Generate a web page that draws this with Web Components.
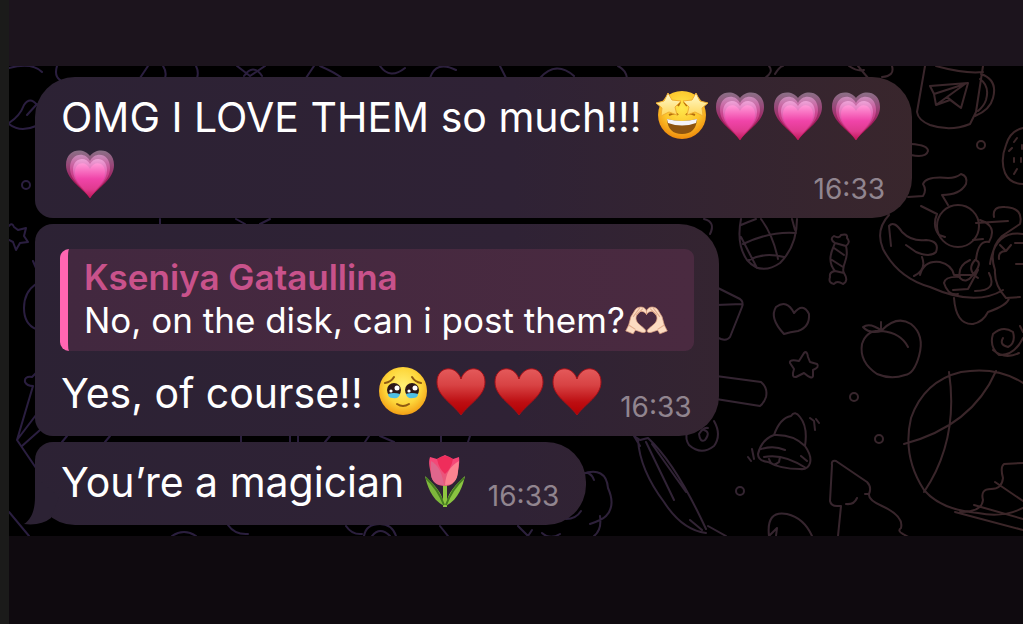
<!DOCTYPE html>
<html lang="en">
<head>
<meta charset="utf-8">
<meta name="viewport" content="width=device-width, initial-scale=1">
<title>Chat</title>
<style>
    body {
        margin: 0;
        background: #0f0a0f;
        color: #fff;
        font-family: Inter, "Liberation Sans", sans-serif;
    }
</style>
</head>
<body>
<chat-screen>
    <chat-bubble class="first">
        OMG I LOVE THEM so much!!!
        <chat-emoji name="star-eyes"></chat-emoji><chat-emoji name="growing-heart"></chat-emoji><chat-emoji name="growing-heart"></chat-emoji><chat-emoji name="growing-heart"></chat-emoji>
        <chat-emoji name="growing-heart"></chat-emoji>
        <time slot="time">16:33</time>
    </chat-bubble>
    <chat-bubble class="middle">
        <chat-reply slot="reply" author="Kseniya Gataullina">No, on the disk, can i post them?<chat-emoji name="heart-hands"></chat-emoji></chat-reply>
        Yes, of course!!
        <chat-emoji name="tearful"></chat-emoji><chat-emoji name="heart"></chat-emoji><chat-emoji name="heart"></chat-emoji><chat-emoji name="heart"></chat-emoji>
        <time slot="time">16:33</time>
    </chat-bubble>
    <chat-bubble class="last" tail>
        You’re a magician
        <chat-emoji name="tulip"></chat-emoji>
        <time slot="time">16:33</time>
    </chat-bubble>
</chat-screen>

<script>
/**
 * Drawings for chat-emoji, all on a 58x58 box.
 */
const EMOJI = {
    'star-eyes': {
        label: 'Star-struck',
        art: `
            <defs>
                <radialGradient id="f" cx=".5" cy=".35" r=".65">
                    <stop offset="0" stop-color="#ffe94e"/><stop offset=".6" stop-color="#fdc52b"/><stop offset="1" stop-color="#ee8a0c"/>
                </radialGradient>
                <linearGradient id="s" x1="0" y1="0" x2="0" y2="1">
                    <stop offset="0" stop-color="#fffbd0"/><stop offset="1" stop-color="#ffd75a"/>
                </linearGradient>
            </defs>
            <circle cx="29" cy="29" r="24" fill="url(#f)"/>
            <path d="M14 33 Q29 37 44 33 Q43 48 29 48 Q15 48 14 33Z" fill="#8d5410"/>
            <path d="M14 33 Q29 37 44 33 L43 37 Q29 42 15 37Z" fill="#f4f4fa"/>
            <path d="M16 29 Q23 26 25 29 M42 29 Q35 26 33 29 M27 16 L25 20 M31 16 L34 20" fill="none" stroke="#b46d0d" stroke-width="2"/>
            <g fill="url(#s)" stroke="#f0ae31" stroke-width="1" stroke-linejoin="round">
                <path d="M15 7 L19 14 L28 15 L22 21 L24 29 L16 26 L8 30 L9 22 L3 17 L11 15Z"/>
                <path d="M43 7 L39 14 L30 15 L36 21 L34 29 L42 26 L50 30 L49 22 L55 17 L47 15Z"/>
            </g>`
    },
    'growing-heart': {
        label: 'Growing heart',
        art: `
            <defs>
                <linearGradient id="a" x1="0" y1="0" x2="0" y2="1">
                    <stop offset="0" stop-color="#8b7187"/><stop offset=".28" stop-color="#974c7b"/><stop offset=".6" stop-color="#a01f61"/><stop offset="1" stop-color="#a80e43"/>
                </linearGradient>
                <linearGradient id="b" x1="0" y1="0" x2="0" y2="1">
                    <stop offset="0" stop-color="#c98ebb"/><stop offset=".4" stop-color="#cb4590"/><stop offset="1" stop-color="#b51255"/>
                </linearGradient>
                <linearGradient id="c" x1="0" y1="0" x2="0" y2="1">
                    <stop offset="0" stop-color="#eda5d8"/><stop offset=".5" stop-color="#dc4ba4"/><stop offset="1" stop-color="#bc185e"/>
                </linearGradient>
                <linearGradient id="d" x1="0" y1="0" x2="0" y2="1">
                    <stop offset="0" stop-color="#ff9bd8"/><stop offset=".45" stop-color="#f044a9"/><stop offset=".75" stop-color="#df3a8e"/><stop offset="1" stop-color="#be1657"/>
                </linearGradient>
            </defs>
            <path fill="url(#a)" d="M29 12 C23 3 5 4 5 21 C5 35 20 43 29 54 C38 43 53 35 53 21 C53 4 35 3 29 12Z"/>
            <path fill="url(#b)" d="M29 17 C24 7 9 9 9 24 C9 37 22 44 29 54 C36 44 49 37 49 24 C49 9 34 7 29 17Z"/>
            <path fill="url(#c)" d="M29 20 C25 12 12 13 12 26 C12 38 23 45 29 54 C35 45 46 38 46 26 C46 13 33 12 29 20Z"/>
            <path fill="url(#d)" d="M29 25 C25 16 14 18 14 28 C14 39 24 45 29 54 C34 45 44 39 44 28 C44 18 33 16 29 25Z"/>`
    },
    'heart': {
        label: 'Red heart',
        art: `
            <defs>
                <linearGradient id="h" x1="0" y1="0" x2="0" y2="1">
                    <stop offset="0" stop-color="#e45a5b"/><stop offset=".35" stop-color="#d84344"/><stop offset=".72" stop-color="#bd0e12"/><stop offset="1" stop-color="#b20002"/>
                </linearGradient>
            </defs>
            <path fill="url(#h)" stroke="#a51018" stroke-width="1" d="M29 17 C24 2 5 4 5 20 C5 34 20 41 29 53 C38 41 53 34 53 20 C53 4 34 2 29 17Z"/>`
    },
    'tearful': {
        label: 'Face holding back tears',
        art: `
            <defs>
                <radialGradient id="f" cx=".5" cy=".4" r=".62">
                    <stop offset="0" stop-color="#fff176"/><stop offset=".6" stop-color="#fdd63a"/><stop offset="1" stop-color="#f29a12"/>
                </radialGradient>
            </defs>
            <circle cx="29" cy="29" r="24" fill="url(#f)"/>
            <path d="M11 21 Q17 20 20 15 M47 21 Q41 20 38 15" fill="none" stroke="#8f5a12" stroke-width="2" stroke-linecap="round"/>
            <circle cx="20" cy="28" r="7" fill="#2c1718"/>
            <circle cx="38" cy="28" r="7" fill="#2c1718"/>
            <path d="M14 32 Q20 30 26 32 Q25 37 19 36 Q14 36 14 32Z M32 32 Q38 30 44 32 Q44 36 39 36 Q33 37 32 32Z" fill="#4fbfe4"/>
            <g fill="#fff">
                <circle cx="23" cy="26" r="2.5"/><circle cx="17" cy="29" r="1.6"/>
                <circle cx="41" cy="26" r="2.5"/><circle cx="35" cy="29" r="1.6"/>
            </g>
            <path d="M23 42 Q29 46 35 42" fill="none" stroke="#8f5a12" stroke-width="2" stroke-linecap="round"/>`
    },
    'heart-hands': {
        label: 'Heart hands',
        art: `
            <defs>
                <g id="hand">
                    <path fill="#fcdcc2" stroke="#d99e80" stroke-width="1" stroke-linejoin="round" d="M29 19 C28 12 19 11 14 16 L8 26 L5 37 L1 45 L11 49 L14 44 C20 46 26 49 28 46 C29 43 23 40 18 35 C14 31 14 26 17 22 C20 17 26 18 29 23Z"/>
                    <path fill="none" stroke="#e2ad8f" stroke-width="1.5" d="M20 14 L11 26 M24 15 L15 24 M5 37 L14 43"/>
                </g>
            </defs>
            <use href="#hand"/>
            <use href="#hand" transform="matrix(-1 0 0 1 58 0)"/>`
    },
    'tulip': {
        label: 'Tulip',
        art: `
            <defs>
                <linearGradient id="p" x1="0" y1="0" x2="0" y2="1">
                    <stop offset="0" stop-color="#fa4277"/><stop offset="1" stop-color="#e2607c"/>
                </linearGradient>
            </defs>
            <path d="M27 30 H31 V56 H27Z" fill="#8fc640"/>
            <path d="M9 25 C11 34 15 48 28 55 C27 41 18 34 9 25Z" fill="#7eb83c"/>
            <path d="M49 25 C47 34 43 48 30 55 C31 41 40 34 49 25Z" fill="#8ac441"/>
            <path d="M10 27 Q22 38 28 54 M48 27 Q36 38 30 54" fill="none" stroke="#467c20" stroke-width="2"/>
            <path d="M14 6 L21 8 L29 4 L37 8 L43 6 C44 12 42 19 41 25 Q38 35 29 35 Q17 35 15 24 C14 17 12 12 14 6Z" fill="url(#p)"/>
            <path d="M21 8 Q29 2 37 8 Q35 18 29 23 Q23 18 21 8Z" fill="#ef2d5b"/>
            <path d="M15 10 Q25 15 28 34 Q16 34 15 23Z" fill="#df668c"/>
            <path d="M43 10 Q30 17 29 34 Q41 34 42 21Z" fill="#fc8391"/>`
    }
};

/**
 * One emoji sized to its line of text.
 * @attr {string} name - A key of EMOJI
 */
class ChatEmoji extends HTMLElement {
    connectedCallback() {
        const emoji = EMOJI[this.getAttribute('name')];
        this.attachShadow({ mode: 'open' }).innerHTML = `
            <style>
                :host {
                    display: inline-block;
                    width: var(--emoji-size, 58px);
                    height: var(--emoji-size, 58px);
                    vertical-align: top;
                }
                svg { display: block; width: 100%; height: 100%; overflow: visible; }
            </style>
            <svg viewBox="0 2 58 58" role="img" aria-label="${emoji.label}">${emoji.art}</svg>
        `;
    }
}

/**
 * Quoted message above the text of a bubble.
 * @attr {string} author - Name shown on the first line
 */
class ChatReply extends HTMLElement {
    connectedCallback() {
        this.attachShadow({ mode: 'open' }).innerHTML = `
            <style>
                :host {
                    --emoji-size: 43px;
                    display: block;
                    padding: 7px 24px 9px 16px;
                    border-left: 8px solid #ff66b2;
                    border-radius: 9px;
                    background: linear-gradient(90deg, #42283f, #4a2a40);
                    font-size: 35px;
                    line-height: 43px;
                    white-space: nowrap;
                }
                .author { color: #c8528b; font-weight: 600; }
            </style>
            <div class="author">${this.getAttribute('author')}</div>
            <div class="quote"><slot></slot></div>
        `;
    }
}

/**
 * A message bubble.
 * @attr {boolean} tail - Adds the tail at the bottom left
 */
class ChatBubble extends HTMLElement {
    connectedCallback() {
        this.attachShadow({ mode: 'open' }).innerHTML = `
            <style>
                :host {
                    position: relative;
                    display: block;
                    box-sizing: border-box;
                    width: fit-content;
                    max-width: 877px;
                    padding: 11px 27px 14px 26px;
                    border-radius: 18px 40px 40px 18px;
                    background: linear-gradient(90deg, #2c2234, #2f2235 50%, #39262c 90%) fixed;
                    font-size: 41px;
                    line-height: 58px;
                }
                :host(.first) { border-top-left-radius: 40px; }
                :host(.middle) { padding: 25px 25px 14px; }
                :host([tail]) { border-bottom-left-radius: 40px; }
                .row { display: flex; align-items: flex-end; gap: 14px; }
                :host(.middle) .row { padding: 13px 2px 0 1px; }
                /* a long message runs above the time */
                :host(.first) .text { margin-right: -88px; }
                ::slotted(time) {
                    margin: 0 0 -2px auto;
                    color: #91858f;
                    font-size: 28px;
                    line-height: 34px;
                }
                .tail {
                    position: absolute;
                    left: -12px;
                    bottom: 0;
                    display: none;
                }
                :host([tail]) .tail { display: block; }
            </style>
            <svg class="tail" width="48" height="48" aria-hidden="true">
                <path d="M12 0 V20 C12 32 9 42 1 47 Q18 49 28 41 L36 20Z" fill="#2c2234"/>
            </svg>
            <slot name="reply"></slot>
            <div class="row">
                <div class="text"><slot></slot></div>
                <slot name="time"></slot>
            </div>
        `;
    }
}

/**
 * The line-drawn pattern behind the messages.
 */
class ChatWallpaper extends HTMLElement {
    connectedCallback() {
        this.attachShadow({ mode: 'open' }).innerHTML = `
            <style>
                :host { display: block; overflow: hidden; }
                svg { display: block; width: 100%; height: 100%; }
            </style>
            <svg viewBox="9 66 1014 470" preserveAspectRatio="xMidYMid slice" aria-hidden="true">
                <defs>
                    <linearGradient id="ink" gradientUnits="userSpaceOnUse" x1="9" y1="0" x2="1023" y2="0">
                        <stop offset="0" stop-color="#2a1e40"/><stop offset=".55" stop-color="#2c203c"/><stop offset=".75" stop-color="#35252f"/><stop offset="1" stop-color="#3c2628"/>
                    </linearGradient>
                </defs>
                <g fill="none" stroke="url(#ink)" stroke-width="2" stroke-linecap="round" stroke-linejoin="round">
                    <!-- leaves and swirls along the edges -->
                    <path d="M9 68 Q32 62 42 72 M57 66 Q54 76 60 80 M140 78 L148 66 M163 66 Q167 72 165 78 M196 66 Q199 72 197 78 M237 66 L250 76 L265 66 M244 76 Q253 63 262 76 M306 78 L314 66 M320 66 Q334 72 342 78 M380 66 Q390 80 405 68 M430 78 Q436 60 456 70 M500 66 L506 78 M540 78 Q556 60 574 76"/>
                    <path d="M9 123 Q20 116 24 105 Q30 96 37 105 M37 104 L27 115 M9 124 Q20 133 36 126"/>
                    <circle cx="26" cy="185" r="4"/>
                    <path d="M9 226 Q12 222 14 227 L18 230 L26 228 L24 236 L28 242 L20 243 L16 250 L13 242 L9 240"/>
                    <path d="M33 261 L36 268 M36 284 Q24 292 24 308 Q24 324 36 329 M36 373 L32 377 Q24 376 25 382 Q27 386 33 386 L17 440 M36 415 L17 440 L36 468 M22 446 L40 430 M9 512 L29 536"/>
                    <path d="M160 219 V224 M236 219 L245 224 M270 219 L260 224 M62 442 L67 436 M105 442 L110 436 M241 436 V442 M290 436 V442 M298 436 V442 M330 436 L325 442 M365 442 L369 436 M380 436 L394 442 M441 436 V442 M468 442 L470 436"/>
                    <path d="M172 536 Q184 528 196 536 M228 525 Q235 535 248 534 M346 526 Q352 535 362 534 M364 536 Q366 524 380 524 Q392 524 396 536 M372 536 Q380 526 390 536 M440 526 L448 536 M518 526 L528 536 L532 530"/>
                    <path d="M582 474 Q590 470 594 480 M582 474 Q606 466 608 488 Q616 506 606 516 Q602 520 590 524 M566 519 Q576 519 581 511 M542 533 Q550 540 560 534 M600 516 Q602 530 594 536"/>
                    <path d="M634 436 L640 440 L648 438 Q676 464 706 529 M638 440 Q640 470 664 502 Q682 530 706 533 M646 442 L674 500 M652 444 L686 492 M634 436 L640 446 M690 520 L702 530 M708 526 L726 536"/>
                    <path d="M618 66 Q626 70 627 78 M765 78 Q774 72 769 66 M775 74 Q780 66 783 66 M849 66 Q858 72 864 70 M858 66 L868 78 M892 66 Q895 76 882 77"/>
                    <!-- mug with a paper plane -->
                    <path d="M925 66 L917 112 Q918 120 930 125 Q950 132 970 124 L976 112 L983 66 M936 66 Q965 74 983 72 M981 74 Q998 80 993 98 Q990 110 975 116 M980 79 Q990 86 986 100 Q984 106 978 111"/>
                    <path d="M930 86 L968 83 L961 108 L950 100 L936 105 L934 94Z M934 94 L965 84 L947 97 L936 105 M947 97 L961 108"/>
                    <circle cx="981" cy="145" r="4"/>
                    <path d="M911 144 Q928 145 928 151 Q926 158 911 155"/>
                    <path d="M1023 128 Q1010 131 1006 145 Q1000 160 1005 173 Q1010 184 1023 184 M1017 138 L1014 142 M1012 148 L1009 151 M1014 158 V162 M1021 158 V162 M1017 169 L1014 174 M1022 145 V149"/>
                    <!-- bather in a ring -->
                    <path d="M908 197 L923 196 Q927 190 923 184 Q926 176 948 178 Q956 178 961 174 Q968 176 966 184 Q960 195 942 195 L948 205"/>
                    <circle cx="958" cy="226" r="21"/>
                    <path d="M889 215 Q875 230 883 249 Q898 278 930 287 Q975 307 1003 290 M921 206 L937 214 M937 214 Q932 226 939 235 L945 237 M891 246 L889 226 Q894 220 902 232 Q912 242 926 240 Q940 241 936 252 Q930 258 916 252 L906 245 M922 257 Q927 270 914 276 M920 275 Q924 260 940 262 Q952 265 954 275 L972 275 M970 260 Q957 266 960 278 Q966 284 972 276 Q984 262 975 260 Q966 270 978 278 M944 283 Q945 276 960 277 M944 283 Q948 296 958 294 M953 290 L968 289 Q974 278 978 270 M976 260 Q978 240 989 242 Q998 226 980 220 M976 223 L1008 221 M994 217 Q992 206 1005 207 Q1024 208 1020 224 Q1008 232 1002 236 Q988 250 995 270 Q994 285 1006 298 L1020 297 M973 240 L983 239 M989 273 Q998 291 975 291 M954 298 Q956 325 973 324 Q983 322 988 312 Q1008 305 1009 298 M1023 234 Q995 230 990 264 M1000 245 L1006 251 L1011 245 M1006 251 Q998 251 999 259 M1015 243 H1023 M1016 264 H1023"/>
                    <!-- woven egg -->
                    <path d="M741 219 Q736 244 747 260 Q761 276 780 263 Q797 246 797 219 M741 225 Q748 222 756 219 M743 244 Q770 231 796 233 M749 260 Q764 252 784 257 M741 237 L757 268 M761 219 Q773 235 778 259 M792 219 L795 230"/>
                    <path d="M704 219 Q716 222 710 234"/>
                    <!-- candy -->
                    <path d="M835 243 Q829 239 834 236 Q839 239 841 235 Q848 233 847 238 Q851 242 846 246 Q848 254 845 262 Q842 270 844 273 Q849 281 843 284 Q837 280 834 284 Q828 283 830 277 Q829 272 835 271 Q827 262 833 248Z M834 248 L844 255 M832 260 L843 267 M835 243 L846 246 M835 271 L844 273"/>
                    <!-- envelope, heart, star, apple -->
                    <path d="M716 287 L740 299 Q744 302 742 307 L730 337 Q727 341 721 339 L716 337 M716 305 L742 304"/>
                    <path d="M784 334 Q769 318 776 307 Q787 299 794 313 Q803 302 809 314 Q810 327 798 331 Q790 332 784 334Z"/>
                    <path d="M804 353 Q807 350 808 357 L810 362 L817 364 Q820 367 813 370 L813 376 Q812 380 804 373 L796 377 Q791 378 794 369 L790 363 Q789 359 799 361Z"/>
                    <path d="M882 330 Q897 315 911 324 Q925 335 919 356 Q914 374 905 375 Q891 380 877 374 Q859 362 862 344 Q867 329 882 331 Q901 333 908 347 M882 331 Q870 322 863 327 Q869 334 882 331 M881 322 V331"/>
                    <path d="M1023 338 Q1014 356 999 355 Q989 347 993 334 Q1003 325 1013 332 Q1016 343 1008 347 Q999 345 1003 338 M1020 326 L1023 332 M993 350 Q1005 360 1019 353"/>
                    <path d="M716 376 L761 382 Q768 388 766 397 Q764 403 760 406 L716 399"/>
                    <path d="M708 428 Q703 427 699 434 Q700 443 705 440 Q711 432 704 430 M714 421 Q722 435 714 446 Q701 456 689 445 Q685 439 687 432"/>
                    <circle cx="854" cy="397" r="4"/><circle cx="879" cy="439" r="4"/><circle cx="740" cy="491" r="4"/>
                    <!-- bell -->
                    <path d="M774 435 Q780 418 791 416 Q795 410 800 417 Q808 427 805 446 Q812 456 810 463 Q808 470 800 469 Q780 469 768 462 Q758 461 758 454 Q761 440 774 435 Q793 434 805 446 M761 449 Q774 445 785 450 M764 457 Q783 453 806 468 M769 459 Q772 468 779 462 L780 457 M801 456 L807 461 M810 418 L814 421 L815 430 M816 419 L819 423 M748 457 L751 461 M752 449 L754 459"/>
                    <!-- tree and gift -->
                    <path d="M836 461 Q831 460 832 465 L830 501 Q831 506 837 506 L841 506 L838 536 M836 461 L867 482 Q872 487 869 494 Q868 500 882 506 Q904 516 901 528 Q897 531 903 534 L912 539 M869 494 L865 494 M846 504 Q854 505 857 498 M769 536 Q766 510 787 514 Q804 518 812 536 M769 536 L777 528 L776 536"/>
                    <!-- ball -->
                    <path d="M1023 383 Q997 366 961 372 Q924 381 911 418 Q902 456 924 490 Q941 510 978 513 Q1003 518 1023 508 M949 372 Q959 440 924 492 M996 371 Q972 426 904 444 M1023 463 L1004 464 Q1000 467 1003 478 Q1002 489 991 489 Q980 489 983 500 Q982 512 960 512 M995 482 L1023 501 M974 505 L1023 519 M955 512 L1023 530"/>
                </g>
            </svg>
        `;
    }
}

/**
 * Wallpaper, bands above and below, and the list of bubbles.
 */
class ChatScreen extends HTMLElement {
    connectedCallback() {
        this.attachShadow({ mode: 'open' }).innerHTML = `
            <style>
                :host {
                    display: grid;
                    grid-template-rows: 66px auto 1fr;
                    box-sizing: border-box;
                    min-height: 100vh;
                    border-left: 9px solid #1b1b1a;
                }
                .top { background: #1c141d; }
                .chat { position: relative; background: #000; }
                chat-wallpaper { position: absolute; inset: 0; }
                .list {
                    position: relative;
                    display: flex;
                    flex-direction: column;
                    gap: 6px;
                    padding: 11px 26px;
                }
                .bottom { background: #0f0a0f; }
            </style>
            <div class="top"></div>
            <main class="chat">
                <chat-wallpaper></chat-wallpaper>
                <div class="list"><slot></slot></div>
            </main>
            <div class="bottom"></div>
        `;
    }
}

customElements.define('chat-emoji', ChatEmoji);
customElements.define('chat-reply', ChatReply);
customElements.define('chat-bubble', ChatBubble);
customElements.define('chat-wallpaper', ChatWallpaper);
customElements.define('chat-screen', ChatScreen);
</script>
</body>
</html>
